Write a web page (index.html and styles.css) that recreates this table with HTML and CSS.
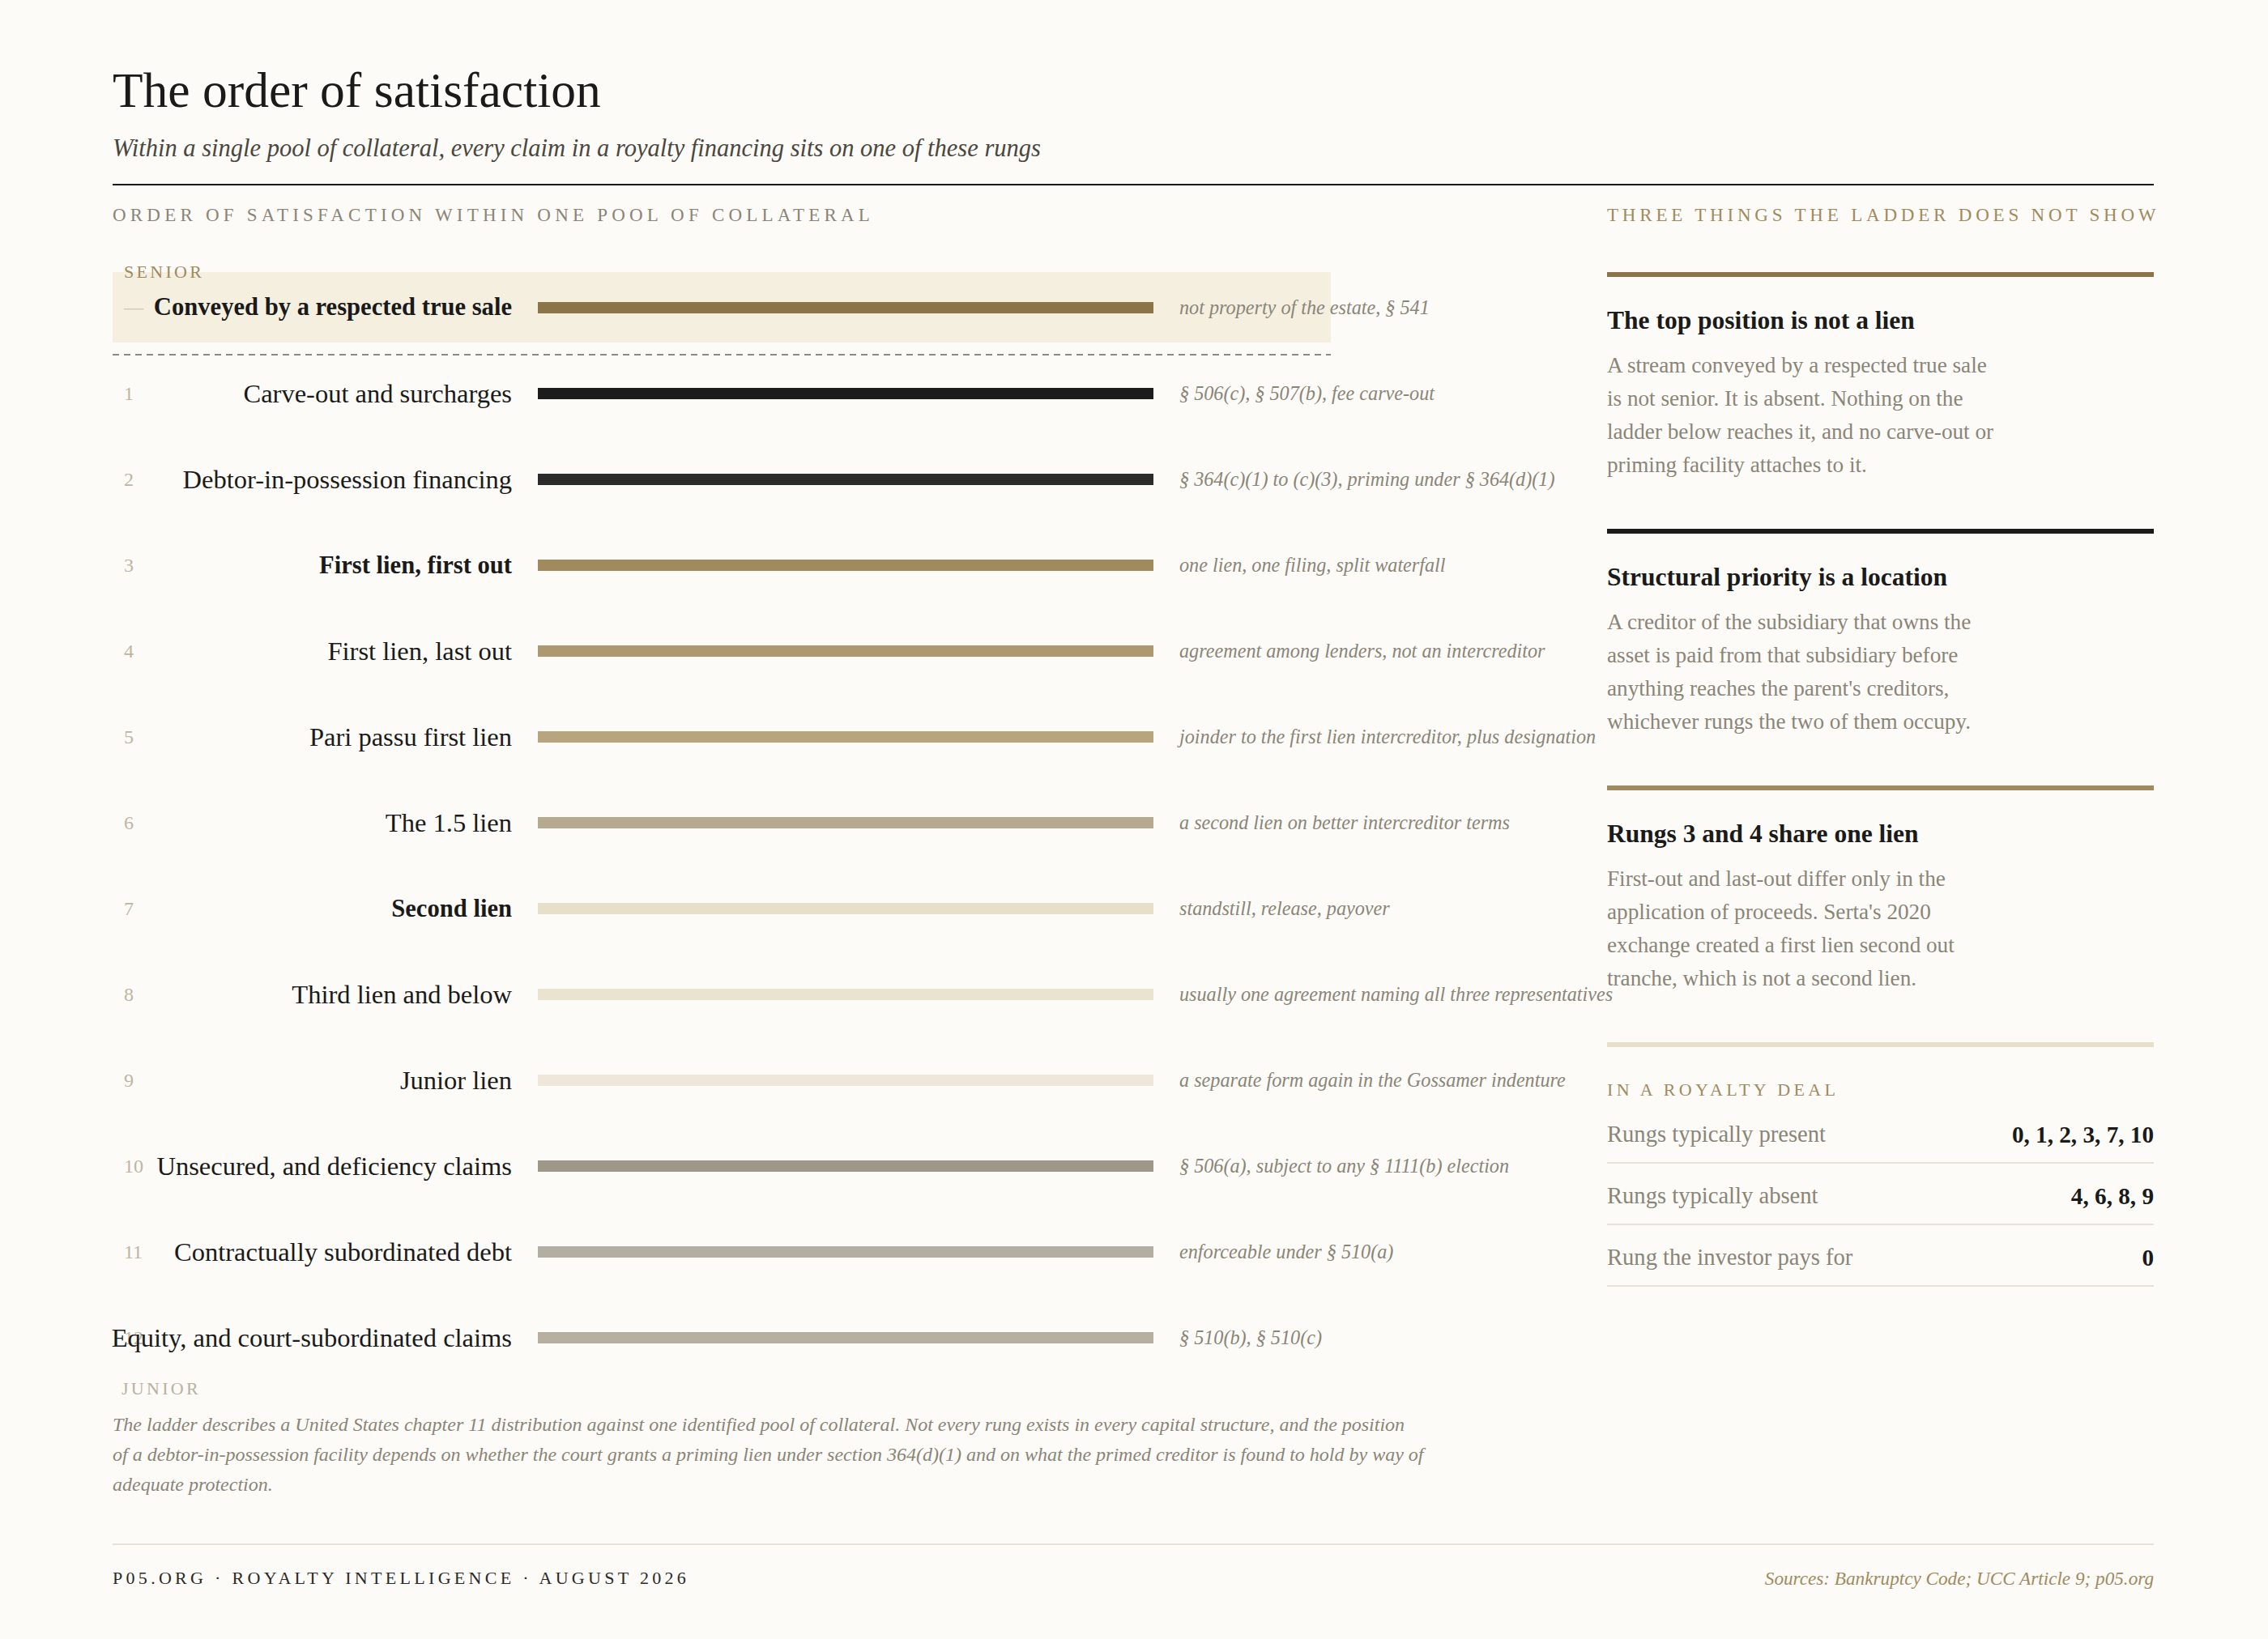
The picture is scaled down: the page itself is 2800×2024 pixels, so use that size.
FILE: index.html
```html
<!DOCTYPE html>
<html lang="en">
<head>
<meta charset="utf-8">
<title>The order of satisfaction</title>
<link rel="stylesheet" href="styles.css">
</head>
<body>
<div class="page">
  <header class="head">
    <h1 class="title">The order of satisfaction</h1>
    <p class="subtitle">Within a single pool of collateral, every claim in a royalty financing sits on one of these rungs</p>
  </header>

  <div class="main">
    <section class="ladder-col">
      <div class="eyebrow">Order of satisfaction within one pool of collateral</div>
      <div class="ladder">
        <div class="end-label senior">Senior</div>
        <div class="rung rung-top">
          <span class="num dash">—</span>
          <span class="label strong"><span>Conveyed by a respected true sale</span></span>
          <span class="bar c0"></span>
          <span class="note">not property of the estate, § 541</span>
        </div>
        <div class="sep"></div>
        <div class="rungs">
          <div class="rung">
            <span class="num">1</span>
            <span class="label"><span>Carve-out and surcharges</span></span>
            <span class="bar c1"></span>
            <span class="note">§ 506(c), § 507(b), fee carve-out</span>
          </div>
          <div class="rung">
            <span class="num">2</span>
            <span class="label"><span>Debtor-in-possession financing</span></span>
            <span class="bar c2"></span>
            <span class="note">§ 364(c)(1) to (c)(3), priming under § 364(d)(1)</span>
          </div>
          <div class="rung">
            <span class="num">3</span>
            <span class="label strong"><span>First lien, first out</span></span>
            <span class="bar c3"></span>
            <span class="note">one lien, one filing, split waterfall</span>
          </div>
          <div class="rung">
            <span class="num">4</span>
            <span class="label"><span>First lien, last out</span></span>
            <span class="bar c4"></span>
            <span class="note">agreement among lenders, not an intercreditor</span>
          </div>
          <div class="rung">
            <span class="num">5</span>
            <span class="label"><span>Pari passu first lien</span></span>
            <span class="bar c5"></span>
            <span class="note">joinder to the first lien intercreditor, plus designation</span>
          </div>
          <div class="rung">
            <span class="num">6</span>
            <span class="label"><span>The 1.5 lien</span></span>
            <span class="bar c6"></span>
            <span class="note">a second lien on better intercreditor terms</span>
          </div>
          <div class="rung">
            <span class="num">7</span>
            <span class="label strong"><span>Second lien</span></span>
            <span class="bar c7"></span>
            <span class="note">standstill, release, payover</span>
          </div>
          <div class="rung">
            <span class="num">8</span>
            <span class="label"><span>Third lien and below</span></span>
            <span class="bar c8"></span>
            <span class="note">usually one agreement naming all three representatives</span>
          </div>
          <div class="rung">
            <span class="num">9</span>
            <span class="label"><span>Junior lien</span></span>
            <span class="bar c9"></span>
            <span class="note">a separate form again in the Gossamer indenture</span>
          </div>
          <div class="rung">
            <span class="num">10</span>
            <span class="label"><span>Unsecured, and deficiency claims</span></span>
            <span class="bar c10"></span>
            <span class="note">§ 506(a), subject to any § 1111(b) election</span>
          </div>
          <div class="rung">
            <span class="num">11</span>
            <span class="label"><span>Contractually subordinated debt</span></span>
            <span class="bar c11"></span>
            <span class="note">enforceable under § 510(a)</span>
          </div>
          <div class="rung">
            <span class="num">12</span>
            <span class="label"><span>Equity, and court-subordinated claims</span></span>
            <span class="bar c12"></span>
            <span class="note">§ 510(b), § 510(c)</span>
          </div>
        </div>
        <div class="end-label junior">Junior</div>
      </div>
      <p class="footnote">The ladder describes a United States chapter 11 distribution against one identified pool of collateral. Not every rung exists in every capital structure, and the position<br>of a debtor-in-possession facility depends on whether the court grants a priming lien under section 364(d)(1) and on what the primed creditor is found to hold by way of adequate protection.</p>
    </section>

    <aside class="side">
      <div class="eyebrow gold">Three things the ladder does not show</div>
      <div class="card rule-gold">
        <h3 class="card-title">The top position is not a lien</h3>
        <p class="card-body">A stream conveyed by a respected true sale is not senior. It is absent. Nothing on the ladder below reaches it, and no carve-out or priming facility attaches to it.</p>
      </div>
      <div class="card rule-ink">
        <h3 class="card-title">Structural priority is a location</h3>
        <p class="card-body">A creditor of the subsidiary that owns the asset is paid from that subsidiary before anything reaches the parent's creditors, whichever rungs the two of them occupy.</p>
      </div>
      <div class="card rule-tan">
        <h3 class="card-title">Rungs 3 and 4 share one lien</h3>
        <p class="card-body">First-out and last-out differ only in the application of proceeds. Serta's 2020 exchange created a first lien second out tranche, which is not a second lien.</p>
      </div>
      <div class="deal">
        <div class="eyebrow gold small">In a royalty deal</div>
        <div class="deal-row"><span class="deal-key">Rungs typically present</span><span class="deal-val">0, 1, 2, 3, 7, 10</span></div>
        <div class="deal-row"><span class="deal-key">Rungs typically absent</span><span class="deal-val">4, 6, 8, 9</span></div>
        <div class="deal-row"><span class="deal-key">Rung the investor pays for</span><span class="deal-val">0</span></div>
      </div>
    </aside>
  </div>

  <footer class="foot">
    <span class="foot-left">P05.org · Royalty Intelligence · August 2026</span>
    <span class="foot-right">Sources: Bankruptcy Code; UCC Article 9; p05.org</span>
  </footer>
</div>
</body>
</html>
```

FILE: styles.css
```css
* { box-sizing: border-box; }

html, body {
  margin: 0;
  padding: 0;
  background: #fcfbf7;
}

body {
  font-family: "Liberation Serif", "Times New Roman", serif;
  color: #1a1a1a;
}

.page {
  width: 2800px;
  padding: 75px 141px 0 139px;
}

/* header */
.head {
  border-bottom: 2px solid #1a1a1a;
  padding-bottom: 25px;
}

.title {
  margin: 0;
  font-size: 61.5px;
  line-height: 73px;
  font-weight: 400;
}

.subtitle {
  margin: 16px 0 0;
  font-size: 30.5px;
  line-height: 38px;
  font-style: italic;
  color: #4a4740;
}

/* main grid */
.main {
  display: grid;
  grid-template-columns: 1fr 675px;
  column-gap: 80px;
  margin-top: 24px;
}

.eyebrow {
  font-size: 23px;
  line-height: 26px;
  letter-spacing: 5.2px;
  text-transform: uppercase;
  color: #8a8578;
  white-space: nowrap;
}

.eyebrow.gold {
  color: #a08a5e;
  letter-spacing: 4.8px;
}

.eyebrow.small {
  font-size: 22px;
  letter-spacing: 4.4px;
}

/* ladder */
.ladder-col {
  min-width: 0;
}

.ladder {
  width: 1504px;
}

.end-label {
  font-size: 22px;
  line-height: 26px;
  letter-spacing: 0.15em;
  text-transform: uppercase;
  padding-left: 14px;
  position: relative;
  z-index: 1;
}

.senior {
  margin-top: 44px;
  margin-bottom: -13px;
  color: #a08a5e;
}

.junior {
  margin-top: -3px;
  color: #b8b0a0;
  padding-left: 11px;
}

.rung {
  display: grid;
  grid-template-columns: 8px 439px 760px 1fr;
  column-gap: 32px;
  align-items: center;
  height: 106px;
  padding-left: 14px;
}

.rung-top {
  height: 87px;
  background: #f5efe0;
}

.sep {
  margin-top: 14px;
  height: 2px;
  background: repeating-linear-gradient(to right, #8a8a86 0 8px, transparent 8px 14px);
}

.rungs {
  margin-top: -6px;
}

.num {
  font-size: 24px;
  color: #bdb5a4;
  white-space: nowrap;
}

.num.dash {
  color: #cfc6b2;
}

.label {
  display: flex;
  justify-content: flex-end;
  white-space: nowrap;
  font-size: 32.5px;
  color: #1a1a1a;
}

.label.strong {
  font-weight: 700;
  font-size: 30.6px;
}

.bar {
  display: block;
  height: 14px;
}

.c0 { background: #8b7548; }
.c1 { background: #1c1c1c; }
.c2 { background: #2b2b2b; }
.c3 { background: #a08a5e; }
.c4 { background: #ad9870; }
.c5 { background: #b8a580; }
.c6 { background: #b5a98e; }
.c7 { background: #e8dfc8; }
.c8 { background: #eae3d0; }
.c9 { background: #efe8da; }
.c10 { background: #9e9888; }
.c11 { background: #b2afa2; }
.c12 { background: #b7b0a0; }

.note {
  font-size: 24.2px;
  font-style: italic;
  color: #8a8578;
  white-space: nowrap;
}

.footnote {
  margin: 13px 0 0;
  max-width: 1660px;
  font-size: 24px;
  line-height: 37px;
  font-style: italic;
  color: #8a8578;
}

/* side */
.side {
  min-width: 0;
}

.card {
  border-top: 6px solid #8b7548;
  padding-top: 34px;
  margin-bottom: 58px;
}

.side > .eyebrow + .card { margin-top: 57px; }

.rule-gold { border-top-color: #8b7548; }
.rule-ink { border-top-color: #1a1a1a; }
.rule-tan { border-top-color: #a08a5e; }

.card-title {
  margin: 0;
  font-size: 31.5px;
  line-height: 39px;
  font-weight: 700;
  color: #1a1a1a;
}

.card-body {
  margin: 16px 0 0;
  max-width: 486px;
  font-size: 27.2px;
  line-height: 41px;
  color: #8a8578;
}

.deal {
  border-top: 6px solid #e8dfc8;
  padding-top: 40px;
}

.deal .eyebrow {
  margin-bottom: 2px;
}

.deal-row {
  display: flex;
  justify-content: space-between;
  align-items: center;
  padding: 22px 0 16px;
  line-height: 36px;
  border-bottom: 2px solid #e4e2d9;
}

.deal-key {
  font-size: 28.6px;
  color: #8a8578;
}

.deal-val {
  font-size: 29.2px;
  font-weight: 700;
  color: #1a1a1a;
}

/* footer */
.foot {
  margin-top: 54px;
  border-top: 2px solid #e4e2d9;
  padding-top: 28px;
  display: flex;
  justify-content: space-between;
  align-items: center;
  line-height: 26px;
}

.foot-left {
  font-size: 22px;
  letter-spacing: 4.3px;
  text-transform: uppercase;
  color: #2a2a2a;
}

.foot-right {
  font-size: 23.2px;
  font-style: italic;
  color: #a08a5e;
}
```
